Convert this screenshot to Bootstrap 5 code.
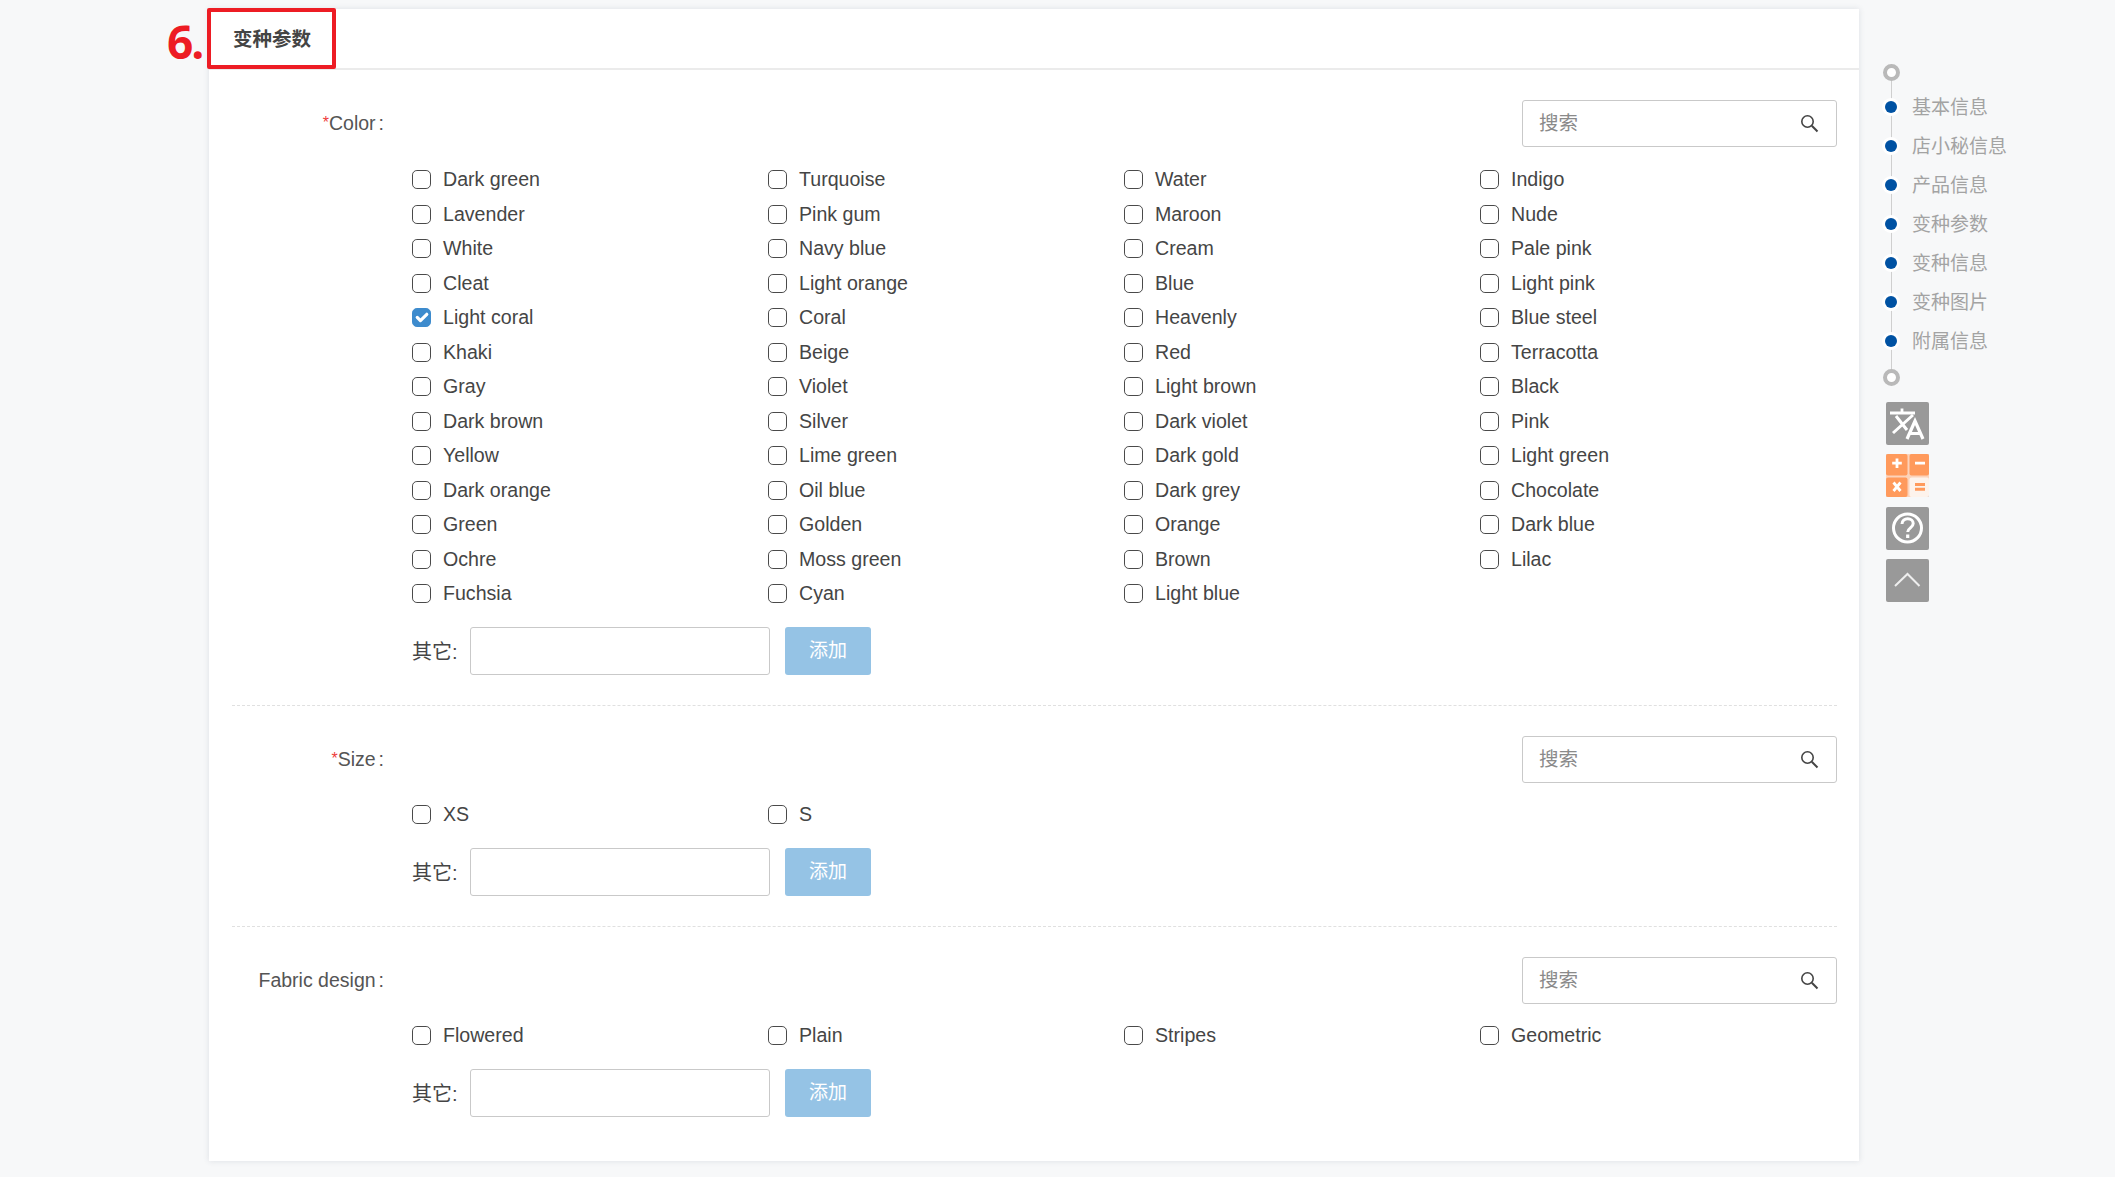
<!DOCTYPE html>
<html lang="zh">
<head>
<meta charset="utf-8">
<title>变种参数</title>
<link rel="stylesheet" href="https://cdn.jsdelivr.net/npm/bootstrap@5.3.0/dist/css/bootstrap.min.css">
<style>
html,body{height:100%;}
body{background:#f7f8f9;color:#454545;font-family:"Liberation Sans","Noto Sans CJK SC",sans-serif;font-size:19px;overflow:hidden;}
.page-wrap{padding:9px 0 0 209px;}
.step-num{position:absolute;left:-42px;top:2px;font-family:"Open Sans",sans-serif;font-weight:700;font-size:46px;line-height:60px;color:#ed1c24;letter-spacing:-2px;}
.main-panel{width:1650px;height:1152px;background:#fff;box-shadow:0 0 6px rgba(60,70,100,.14);position:relative;}
.panel-head{height:61px;border-bottom:2px solid #ebebeb;padding-left:24px;}
.panel-title{font-weight:700;font-size:19.5px;color:#444;line-height:61px;}
.red-frame{position:absolute;left:-2px;top:-1px;width:129px;height:61px;border:4px solid #ed1c24;border-radius:2px;}
.sect{padding:30px 22px 0 23px;}
.sect-first{padding-top:30px;}
.sect-first .opts{margin-top:15.5px;}
.sect-first .other-row{margin-top:16px;}
.sect-first .field-label{margin-top:1px;}
.sect-rule{border-top:1px dashed #e0e0e0;margin:30px 22px 0 23px;}
.field-label{width:152px;text-align:right;color:#555;font-size:19.5px;white-space:nowrap;}
.req-star{color:#ee3b3b;font-size:16px;vertical-align:2px;}
.colon-gap{margin-left:3px;}
.search-box{width:315px;height:47px;border:1px solid #c9c9c9;border-radius:3px;padding:0 16px 0 16px;background:#fff;}
.search-box input{border:0;outline:0;padding:0;flex:1;min-width:0;font-size:19.5px;color:#555;font-family:inherit;background:transparent;}
.search-box input::placeholder{color:#8a8a8a;}
.opts{margin:14px 0 0 180px;display:grid;grid-template-columns:repeat(4,356px);grid-auto-rows:34.5px;}
.opt-item{display:flex;align-items:center;gap:12px;color:#454545;font-size:19.6px;margin:0;white-space:nowrap;}
.opt-box{width:19px;height:19px;margin:0;flex:none;border:1.5px solid #4a4a4a;border-radius:3px;box-shadow:none!important;}
.opt-box:checked{background-color:#3d8bcd;border-color:#3d8bcd;background-size:125%;background-position:center;}
.other-row{margin:16.500px 0 0 180px;}
.other-label{width:58px;font-size:20px;color:#454545;flex:none;padding-top:2px;}
.other-input{width:300px;height:48px;border:1px solid #c9c9c9;border-radius:3px;padding:0 10px;box-shadow:none!important;}
.add-btn{width:86px;height:48px;margin-left:15px;padding:0;font-size:19px;color:#fff;background:#95c3e5;border:0;border-radius:3px;}
.add-btn:hover,.add-btn:disabled{background:#95c3e5;color:#fff;opacity:1;}
.side-rail{margin:55px 0 0 24px;width:200px;}
.rail-list{position:relative;width:190px;}
.rail-list::before{content:"";position:absolute;left:8px;top:10px;bottom:8px;width:1px;background:#cfcfcf;}
.rail-cap{display:block;width:17px;height:17px;border:4px solid #b9b9b9;border-radius:50%;background:#fff;position:relative;margin-bottom:8px;}
.rail-end{margin:7px 0 0;}
.rail-item{height:39px;display:flex;align-items:center;position:relative;color:#a3a3a3;font-size:19px;}
.rail-dot{width:12px;height:12px;background:#0052a3;border-radius:50%;margin:-4px 15px 0 2px;box-shadow:0 0 0 3px #fff;flex:none;}
.tool-stack{margin:16px 0 0 3px;width:43px;gap:9.3px;}
.tool-btn{width:43px;height:43px;border-radius:2px;background:#999;display:block;}
.tool-btn svg{display:block;width:43px;height:43px;}
</style>
</head>
<body>
<div class="page-wrap d-flex align-items-start">
  <main class="main-panel">
    <span class="step-num">6.</span>
    <div class="panel-head"><span class="panel-title">变种参数</span></div>
    <div class="red-frame"></div>

    <section class="sect sect-first">
      <div class="d-flex justify-content-between align-items-center">
        <div class="field-label"><span class="req-star">*</span>Color<span class="colon-gap">:</span></div>
        <div class="search-box d-flex align-items-center"><input type="text" placeholder="搜索"><svg width="20" height="20" viewBox="0 0 20 20" fill="none" stroke="#444" stroke-width="1.6"><circle cx="7.500" cy="7.500" r="5.700"/><path d="M11.800 11.800L17.500 17.500" stroke-width="2"/></svg></div>
      </div>
      <div class="opts" id="colors"></div>
      <div class="other-row d-flex align-items-center"><label class="other-label">其它:</label><input class="form-control other-input" type="text"><button class="btn add-btn" type="button">添加</button></div>
    </section>
    <div class="sect-rule"></div>

    <section class="sect">
      <div class="d-flex justify-content-between align-items-center">
        <div class="field-label"><span class="req-star">*</span>Size<span class="colon-gap">:</span></div>
        <div class="search-box d-flex align-items-center"><input type="text" placeholder="搜索"><svg width="20" height="20" viewBox="0 0 20 20" fill="none" stroke="#444" stroke-width="1.6"><circle cx="7.500" cy="7.500" r="5.700"/><path d="M11.800 11.800L17.500 17.500" stroke-width="2"/></svg></div>
      </div>
      <div class="opts" id="sizes"></div>
      <div class="other-row d-flex align-items-center"><label class="other-label">其它:</label><input class="form-control other-input" type="text"><button class="btn add-btn" type="button">添加</button></div>
    </section>
    <div class="sect-rule"></div>

    <section class="sect">
      <div class="d-flex justify-content-between align-items-center">
        <div class="field-label">Fabric design<span class="colon-gap">:</span></div>
        <div class="search-box d-flex align-items-center"><input type="text" placeholder="搜索"><svg width="20" height="20" viewBox="0 0 20 20" fill="none" stroke="#444" stroke-width="1.6"><circle cx="7.500" cy="7.500" r="5.700"/><path d="M11.800 11.800L17.500 17.500" stroke-width="2"/></svg></div>
      </div>
      <div class="opts" id="fabrics"></div>
      <div class="other-row d-flex align-items-center"><label class="other-label">其它:</label><input class="form-control other-input" type="text"><button class="btn add-btn" type="button">添加</button></div>
    </section>
  </main>

  <aside class="side-rail">
    <div class="rail-list">
      <span class="rail-cap"></span>
      <div class="rail-item"><span class="rail-dot"></span>基本信息</div>
      <div class="rail-item"><span class="rail-dot"></span>店小秘信息</div>
      <div class="rail-item"><span class="rail-dot"></span>产品信息</div>
      <div class="rail-item"><span class="rail-dot"></span>变种参数</div>
      <div class="rail-item"><span class="rail-dot"></span>变种信息</div>
      <div class="rail-item"><span class="rail-dot"></span>变种图片</div>
      <div class="rail-item"><span class="rail-dot"></span>附属信息</div>
      <span class="rail-cap rail-end"></span>
    </div>
    <div class="tool-stack d-flex flex-column">
      <a class="tool-btn"><svg viewBox="0 0 43 43" fill="none" stroke="#fff"><path d="M4 11H29M16 6.500V11" stroke-width="2.800"/><path d="M7 31L27 13M10 14L21 28" stroke-width="3"/><path d="M21 37L29 19L37 37M24 31.500H34" stroke-width="3.200"/></svg></a>
      <a class="tool-btn"><svg viewBox="0 0 43 43"><rect width="43" height="43" rx="2" fill="#fcd3ba"/><rect width="21.500" height="21.500" rx="2" fill="#ff9a5c"/><rect x="23.500" width="19.500" height="21.500" rx="2" fill="#ff9a5c"/><rect y="23.500" width="21.500" height="19.500" rx="2" fill="#ff9a5c"/><rect x="23.500" y="23.500" width="19.500" height="19.500" rx="2" fill="#fdf3ec"/><path d="M11 4.500v9.500M6.200 9.200h9.600M29 9.200h10M7.500 28.500l7 8.500M14.500 28.500l-7 8.500" stroke="#fff" stroke-width="2.800" fill="none"/><path d="M29 30.500h10M29 35.200h10" stroke="#ff9a5c" stroke-width="3" fill="none"/></svg></a>
      <a class="tool-btn"><svg viewBox="0 0 43 43" fill="none" stroke="#fff"><circle cx="21.500" cy="21" r="14" stroke-width="3"/><path d="M16 17c0-3.300 2.600-5.300 5.700-5.300s5.500 2 5.500 4.800c0 4.500-5.500 4.200-5.500 8.600" stroke-width="3"/><path d="M21.700 27.500v3.500" stroke-width="3.200"/></svg></a>
      <a class="tool-btn"><svg viewBox="0 0 43 43" fill="none" stroke="#eee" stroke-width="2"><path d="M9 27L21.500 15L33.500 27"/></svg></a>
    </div>
  </aside>
</div>
<script>
const colors=["Dark green","Turquoise","Water","Indigo","Lavender","Pink gum","Maroon","Nude","White","Navy blue","Cream","Pale pink","Cleat","Light orange","Blue","Light pink","Light coral","Coral","Heavenly","Blue steel","Khaki","Beige","Red","Terracotta","Gray","Violet","Light brown","Black","Dark brown","Silver","Dark violet","Pink","Yellow","Lime green","Dark gold","Light green","Dark orange","Oil blue","Dark grey","Chocolate","Green","Golden","Orange","Dark blue","Ochre","Moss green","Brown","Lilac","Fuchsia","Cyan","Light blue"];
function fill(id,list){document.getElementById(id).innerHTML=list.map(t=>`<label class="opt-item"><input class="form-check-input opt-box" type="checkbox"${t==="Light coral"?" checked":""}><span>${t}</span></label>`).join("");}
fill("colors",colors);fill("sizes",["XS","S"]);fill("fabrics",["Flowered","Plain","Stripes","Geometric"]);
</script>
<script src="https://cdn.jsdelivr.net/npm/bootstrap@5.3.0/dist/js/bootstrap.bundle.min.js"></script>
</body>
</html>
